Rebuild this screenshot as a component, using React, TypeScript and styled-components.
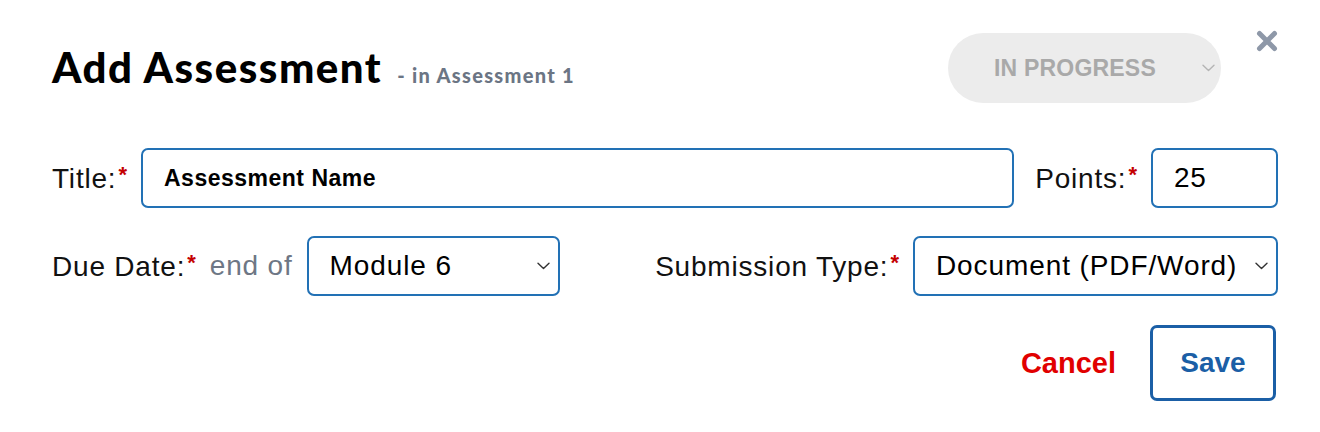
import React from "react";
import styled, { createGlobalStyle } from "styled-components";

const Global = createGlobalStyle`
  body {
    margin: 0;
    background: #ffffff;
    font-family: "Liberation Sans", Arial, sans-serif;
  }
`;

const Chevron = ({ color = "#333" }: { color?: string }) => (
  <svg width="13" height="8" viewBox="0 0 13 8" fill="none">
    <path d="M1 1.2 L6.5 6.5 L12 1.2" stroke={color} strokeWidth="1.4" strokeLinecap="round" strokeLinejoin="round" />
  </svg>
);

const CloseIcon = () => (
  <svg width="22" height="22" viewBox="0 0 22 22" fill="none">
    <path d="M3.5 3.5 L18.5 18.5 M18.5 3.5 L3.5 18.5" stroke="#8e98a8" strokeWidth="5" strokeLinecap="round" />
  </svg>
);

const App = () => {
  return (
    <>
      <Global />
      <Modal>
        <Header>
          <TitleGroup>
            <Title>Add Assessment</Title>
            <Sub>- in Assessment 1</Sub>
          </TitleGroup>
          <StatusPill>
            <span>IN PROGRESS</span>
            <Chevron color="#b4b4b4" />
          </StatusPill>
          <CloseButton>
            <CloseIcon />
          </CloseButton>
        </Header>

        <Row>
          <Label>
            Title:<Star>*</Star>
          </Label>
          <TextInput bold grow>
            Assessment Name
          </TextInput>
          <Label $ml={21}>
            Points:<Star>*</Star>
          </Label>
          <TextInput width={127}>25</TextInput>
        </Row>

        <Row $between>
          <Group>
            <Label>
              Due Date:<Star>*</Star>
            </Label>
            <Muted>end of</Muted>
            <SelectBox width={253}>
              <span>Module 6</span>
              <Chevron />
            </SelectBox>
          </Group>
          <Group>
            <Label>
              Submission Type:<Star>*</Star>
            </Label>
            <SelectBox width={365}>
              <span>Document (PDF/Word)</span>
              <Chevron />
            </SelectBox>
          </Group>
        </Row>

        <Actions>
          <Cancel>Cancel</Cancel>
          <Save>Save</Save>
        </Actions>
      </Modal>
    </>
  );
};
export default App;

const Modal = styled.div`
  padding: 30px 42px 0 52px;
  color: #111;
`;
const Header = styled.div`
  display: flex;
  align-items: center;
`;
const TitleGroup = styled.div`
  display: flex;
  align-items: baseline;
  gap: 15px;
  flex: 1;
`;
const Title = styled.h1`
  margin: 0;
  font-family: Lato, "Open Sans", sans-serif;
  font-weight: 900;
  font-size: 42px;
  color: #000;
  letter-spacing: 1.5px;
`;
const Sub = styled.span`
  font-family: Lato, "Open Sans", sans-serif;
  font-weight: 900;
  font-size: 20px;
  color: #6b7584;
  letter-spacing: 1.3px;
`;
const StatusPill = styled.div`
  margin-top: 3px;
  width: 273px;
  height: 70px;
  box-sizing: border-box;
  border-radius: 35px;
  background: #ececec;
  display: flex;
  align-items: center;
  justify-content: space-between;
  padding: 0 6px 0 46px;
  font-weight: 700;
  font-size: 23px;
  letter-spacing: 0.2px;
  color: #a9a9a9;
`;
const CloseButton = styled.div`
  align-self: flex-start;
  margin-left: 35px;
  width: 22px;
  height: 22px;
`;
const Row = styled.div<{ $between?: boolean }>`
  display: flex;
  align-items: center;
  justify-content: ${(p) => (p.$between ? "space-between" : "flex-start")};
  height: 60px;
  margin-top: ${(p) => (p.$between ? 28 : 45)}px;
`;
const Group = styled.div`
  display: flex;
  align-items: center;
`;
const Label = styled.label<{ $ml?: number }>`
  font-size: 28px;
  letter-spacing: 0.8px;
  margin-left: ${(p) => p.$ml || 0}px;
  margin-right: 14px;
  white-space: nowrap;
  color: #111;
`;
const Star = styled.span`
  color: #c40000;
  font-size: 22px;
  font-weight: 700;
  vertical-align: 6px;
  margin-left: 2px;
  letter-spacing: 0;
`;
const Muted = styled.span`
  font-size: 28px;
  letter-spacing: 0.8px;
  color: #6e7785;
  margin-right: 14px;
`;
const TextInput = styled.div<{ bold?: boolean; grow?: boolean; width?: number }>`
  box-sizing: border-box;
  height: 60px;
  ${(p) => (p.grow ? "flex: 1;" : `width: ${p.width}px;`)}
  border: 2px solid #2271b5;
  border-radius: 7px;
  display: flex;
  align-items: center;
  padding-left: 21px;
  font-size: ${(p) => (p.bold ? 23 : 28)}px;
  font-weight: ${(p) => (p.bold ? 700 : 400)};
  letter-spacing: ${(p) => (p.bold ? 0.5 : 0.8)}px;
  color: #000;
`;
const SelectBox = styled.div<{ width: number }>`
  box-sizing: border-box;
  width: ${(p) => p.width}px;
  height: 60px;
  border: 2px solid #2271b5;
  border-radius: 7px;
  display: flex;
  align-items: center;
  justify-content: space-between;
  padding: 0 8px 0 21px;
  font-size: 28px;
  letter-spacing: 0.9px;
  color: #000;
`;
const Actions = styled.div`
  display: flex;
  justify-content: flex-end;
  align-items: center;
  gap: 34px;
  margin-top: 29px;
  margin-right: 2px;
`;
const Cancel = styled.button`
  border: none;
  background: none;
  padding: 0;
  font-family: "Liberation Sans", Arial, sans-serif;
  font-weight: 700;
  font-size: 29px;
  color: #e10000;
`;
const Save = styled.button`
  box-sizing: border-box;
  width: 126px;
  height: 76px;
  border: 3px solid #1b5fa6;
  border-radius: 7px;
  background: #fff;
  font-family: "Liberation Sans", Arial, sans-serif;
  font-weight: 700;
  font-size: 28px;
  color: #1b5fa6;
`;
